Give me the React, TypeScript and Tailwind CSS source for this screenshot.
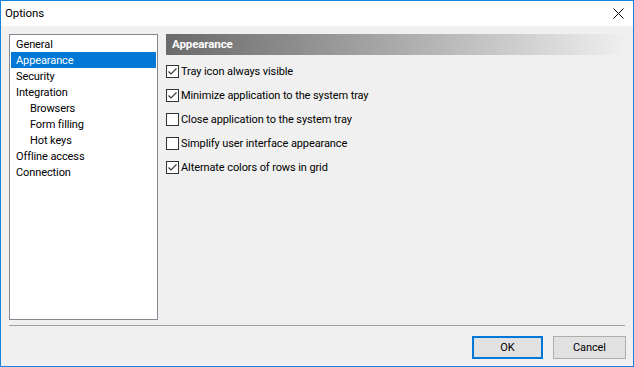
import React from 'react';

const treeItems = [
  { label: 'General', indent: false },
  { label: 'Appearance', indent: false, selected: true },
  { label: 'Security', indent: false },
  { label: 'Integration', indent: false },
  { label: 'Browsers', indent: true },
  { label: 'Form filling', indent: true },
  { label: 'Hot keys', indent: true },
  { label: 'Offline access', indent: false },
  { label: 'Connection', indent: false },
];

const options = [
  { label: 'Tray icon always visible', checked: true },
  { label: 'Minimize application to the system tray', checked: true },
  { label: 'Close application to the system tray', checked: false },
  { label: 'Simplify user interface appearance', checked: false },
  { label: 'Alternate colors of rows in grid', checked: true },
];

function CheckBox({ checked }: { checked: boolean }) {
  return (
    <div className="w-[13px] h-[13px] border border-[#333333] bg-white flex items-center justify-center shrink-0">
      {checked && (
        <svg width="11" height="11" viewBox="0 0 11 11">
          <polyline points="1.5,5.5 4,8 9.5,2.5" fill="none" stroke="#333333" strokeWidth="1.1" />
        </svg>
      )}
    </div>
  );
}

export default function App() {
  return (
    <div
      className="w-[634px] h-[367px] border border-[#1883d7] bg-[#f0f0f0] flex flex-col text-[11px] tracking-[-0.1px] text-black"
      style={{ fontFamily: '"Segoe UI", Roboto, "Liberation Sans", sans-serif' }}
    >
      {/* title bar */}
      <div className="h-[25px] bg-white flex items-center justify-between pl-[4px] pr-[9px] shrink-0">
        <span className="leading-none text-[11.5px]">Options</span>
        <svg width="11" height="11" viewBox="0 0 11 11" className="-mt-[1px]">
          <path d="M0.5 0.5 L10.5 10.5 M10.5 0.5 L0.5 10.5" stroke="#000" strokeWidth="1" />
        </svg>
      </div>

      <div className="flex-1 flex flex-col pl-[8px] pr-[7px] pt-[8px] pb-[8px]">
        <div className="flex h-[286px] gap-[8px]">
          {/* tree */}
          <div className="w-[149px] h-full border border-[#828790] bg-white p-[1px]">
            {treeItems.map((it) => (
              <div
                key={it.label}
                className={`h-[16px] flex items-center ${it.indent ? 'pl-[19px]' : 'pl-[5px]'} ${
                  it.selected ? 'bg-[#0078d7] text-white' : ''
                }`}
              >
                <span className="leading-none mt-[1px]">{it.label}</span>
              </div>
            ))}
          </div>

          {/* options panel */}
          <div className="flex-1 flex flex-col">
            <div className="h-[21px] bg-gradient-to-r from-[#6a6a6a] to-[#f0f0f0] flex items-center pl-[6px] mr-[-2px]">
              <span className="font-bold text-white leading-none text-[11.5px] mt-[1px]">Appearance</span>
            </div>
            <div className="mt-[4px] flex flex-col">
              {options.map((o) => (
                <div key={o.label} className="h-[24px] flex items-center gap-[2px]">
                  <CheckBox checked={o.checked} />
                  <span className="leading-none mt-[1px]">{o.label}</span>
                </div>
              ))}
            </div>
          </div>
        </div>

        <div className="mt-[5px] h-[1px] bg-[#a0a0a0] mr-[1px]" />

        <div className="mt-[10px] flex justify-end gap-[10px]">
          <button className="w-[71px] h-[23px] border-2 border-[#0078d7] bg-[#e1e1e1] leading-none">
            OK
          </button>
          <button className="w-[73px] h-[23px] border border-[#adadad] bg-[#e1e1e1] leading-none">
            Cancel
          </button>
        </div>
      </div>
    </div>
  );
}
